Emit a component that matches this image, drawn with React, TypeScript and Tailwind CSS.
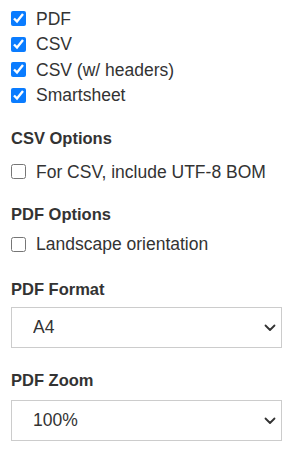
import { useState } from 'react';

// Export settings panel: formats + per-format options

const font = { fontFamily: '"Liberation Sans", Arial, sans-serif' };

function Check({ label, checked, onChange }: { label: string; checked: boolean; onChange: () => void }) {
  return (
    <label className="flex items-center h-[25.5px] text-[17.5px] text-[#333] cursor-pointer">
      <input
        type="checkbox"
        checked={checked}
        onChange={onChange}
        className="w-[15px] h-[15px] m-0 accent-[#0a7cff]"
      />
      <span className="ml-[10px]">{label}</span>
    </label>
  );
}

function Select({ value, options }: { value: string; options: string[] }) {
  return (
    <div className="relative w-[271px]">
      <select
        defaultValue={value}
        className="w-full h-[41px] appearance-none border border-[#cccccc] bg-white pl-[21px] text-[17.5px] text-[#333] outline-none"
        style={font}
      >
        {options.map((o) => (
          <option key={o}>{o}</option>
        ))}
      </select>
      <svg
        className="absolute right-[6px] top-[17px] pointer-events-none"
        width="12"
        height="8"
        viewBox="0 0 12 8"
        fill="none"
      >
        <path d="M1.5 1.5 6 6l4.5-4.5" stroke="#333" strokeWidth="1.8" strokeLinecap="round" strokeLinejoin="round" />
      </svg>
    </div>
  );
}

export default function App() {
  const [formats, setFormats] = useState({ pdf: true, csv: true, csvh: true, smart: true });
  const [bom, setBom] = useState(false);
  const [landscape, setLandscape] = useState(false);

  return (
    <div className="w-[306px] h-[468px] bg-white pl-[11px] pt-[6px]" style={font}>
      {/* Formats */}
      <div>
        <Check label="PDF" checked={formats.pdf} onChange={() => setFormats({ ...formats, pdf: !formats.pdf })} />
        <Check label="CSV" checked={formats.csv} onChange={() => setFormats({ ...formats, csv: !formats.csv })} />
        <Check label="CSV (w/ headers)" checked={formats.csvh} onChange={() => setFormats({ ...formats, csvh: !formats.csvh })} />
        <Check label="Smartsheet" checked={formats.smart} onChange={() => setFormats({ ...formats, smart: !formats.smart })} />
      </div>

      {/* CSV options */}
      <h3 className="mt-[20px] h-[20px] leading-[20px] text-[16.5px] font-bold text-[#333]">CSV Options</h3>
      <div className="mt-[11px]">
        <Check label="For CSV, include UTF-8 BOM" checked={bom} onChange={() => setBom(!bom)} />
      </div>

      {/* PDF options */}
      <h3 className="mt-[19px] h-[20px] leading-[20px] text-[16.5px] font-bold text-[#333]">PDF Options</h3>
      <div className="mt-[8px]">
        <Check label="Landscape orientation" checked={landscape} onChange={() => setLandscape(!landscape)} />
      </div>

      {/* PDF format */}
      <h3 className="mt-[22px] h-[20px] leading-[20px] text-[16.5px] font-bold text-[#333]">PDF Format</h3>
      <div className="mt-[8px]">
        <Select value="A4" options={['A4', 'Letter', 'Legal']} />
      </div>

      {/* PDF zoom */}
      <h3 className="mt-[22px] h-[20px] leading-[20px] text-[16.5px] font-bold text-[#333]">PDF Zoom</h3>
      <div className="mt-[10px]">
        <Select value="100%" options={['50%', '75%', '100%', '125%', '150%']} />
      </div>
    </div>
  );
}
